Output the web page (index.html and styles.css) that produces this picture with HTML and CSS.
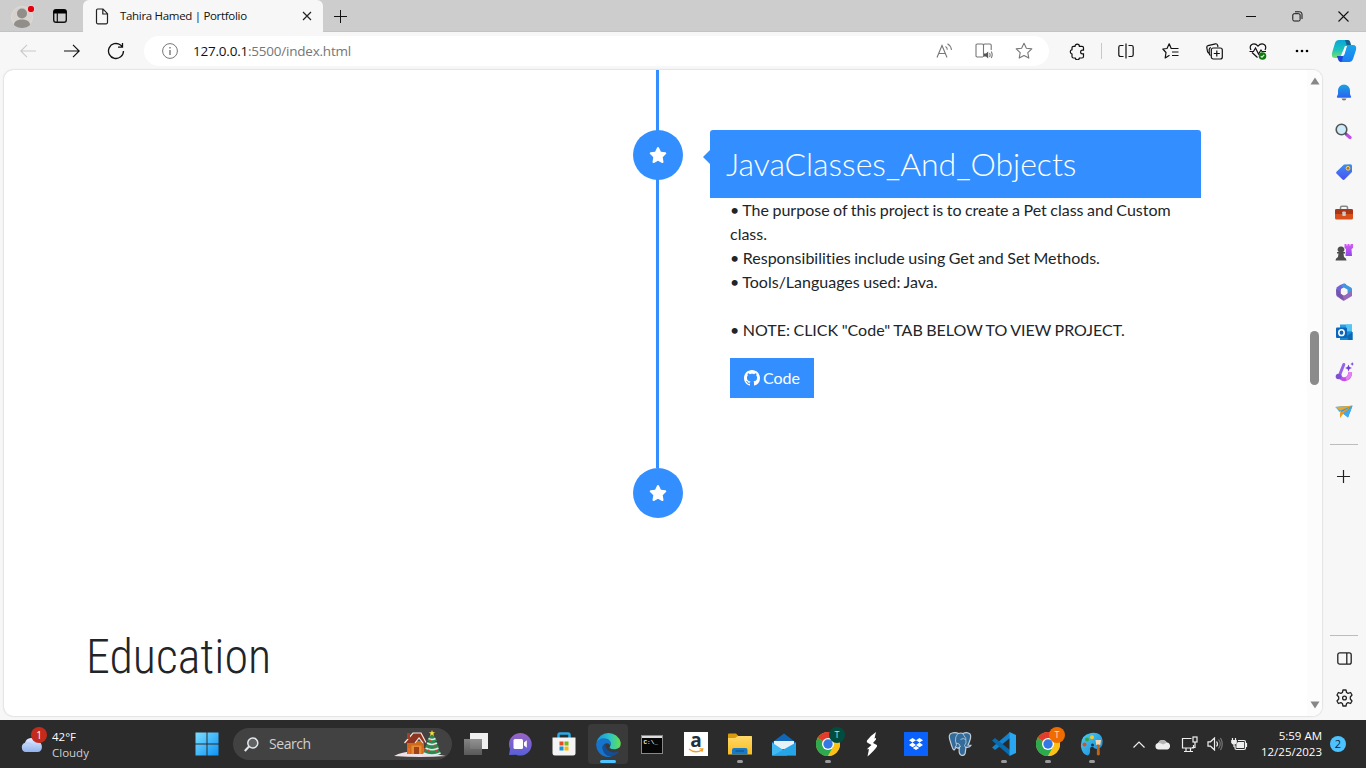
FILE: index.html
```html
<!DOCTYPE html>
<html lang="en">
<head>
<meta charset="utf-8">
<title>Tahira Hamed | Portfolio</title>
<link rel="stylesheet" href="styles.css">
</head>
<body>
<svg class="defs" width="0" height="0">
  <defs>
    <linearGradient id="gWin" gradientUnits="userSpaceOnUse" x1="0" y1="0" x2="24" y2="24"><stop offset="0" stop-color="#7fe0ff"/><stop offset="1" stop-color="#0a91f5"/></linearGradient>
    <linearGradient id="gBell" x1="0" y1="0" x2="0" y2="1"><stop offset="0" stop-color="#1ba3e3"/><stop offset="1" stop-color="#2a62f0"/></linearGradient>
    <linearGradient id="gTag" x1="0" y1="0" x2="0" y2="1"><stop offset="0" stop-color="#3f8df2"/><stop offset="1" stop-color="#4a52f0"/></linearGradient>
    <linearGradient id="gCopA" x1="0" y1="0" x2="0" y2="1"><stop offset="0" stop-color="#0aa5d8"/><stop offset=".55" stop-color="#1cc3ba"/><stop offset="1" stop-color="#7fe06a"/></linearGradient>
    <linearGradient id="gCopB" x1="0" y1="0" x2="0" y2="1"><stop offset="0" stop-color="#18a5ea"/><stop offset="1" stop-color="#1a7cf5"/></linearGradient>
    <linearGradient id="gEdge" x1="0" y1="0" x2="1" y2="0"><stop offset="0" stop-color="#1b8fdc"/><stop offset=".55" stop-color="#2cc5c8"/><stop offset="1" stop-color="#65e04a"/></linearGradient>
    <linearGradient id="gChat" x1="0" y1="0" x2="0" y2="1"><stop offset="0" stop-color="#9a63c4"/><stop offset="1" stop-color="#5660d8"/></linearGradient>
    <linearGradient id="gFolder" x1="0" y1="0" x2="0" y2="1"><stop offset="0" stop-color="#ffd968"/><stop offset="1" stop-color="#fbbc1e"/></linearGradient>
    <linearGradient id="gCloud" x1="0" y1="0" x2="0" y2="1"><stop offset="0" stop-color="#e3edff"/><stop offset="1" stop-color="#8fb2ee"/></linearGradient>
    <linearGradient id="gPaint" x1="0" y1="0" x2="1" y2="1"><stop offset="0" stop-color="#4dd0f2"/><stop offset="1" stop-color="#1583d8"/></linearGradient>
    <linearGradient id="gRook" x1="0" y1="0" x2="0" y2="1"><stop offset="0" stop-color="#d65bf5"/><stop offset="1" stop-color="#8e48ea"/></linearGradient>
    <linearGradient id="gView" x1="0" y1="0" x2="0" y2="1"><stop offset="0" stop-color="#8a8a8a"/><stop offset="1" stop-color="#5c5c5c"/></linearGradient>
    <symbol id="chrome" viewBox="0 0 24 24">
      <circle cx="12" cy="12" r="12" fill="#fbc116"/>
      <path d="M12 12 1.600 6A12 12 0 0 1 22.400 6Z" fill="#e33b2e"/>
      <path d="M12 12 1.600 6A12 12 0 0 0 12 24L17.200 15Z" fill="#2da94f"/>
      <path d="M12 6h10.400A12 12 0 0 1 12 24l5.200-9Z" fill="#fbc116"/>
      <circle cx="12" cy="12" r="6" fill="#fff"/><circle cx="12" cy="12" r="4.700" fill="#3478e5"/>
    </symbol>
    <symbol id="fa-star" viewBox="0 0 576 512">
      <path fill="#fff" d="M316.900 18C311.600 7 300.400 0 288.100 0s-23.400 7-28.800 18L195 150.300 51.400 171.500c-12 1.800-22 10.200-25.700 21.700s-.7 24.200 7.900 32.700L137.800 329 113.200 474.700c-2 12 3 24.200 12.900 31.300s23 8 33.800 2.300l128.300-68.500 128.300 68.500c10.800 5.700 23.900 4.900 33.800-2.300s14.900-19.300 12.900-31.300L438.500 329 542.700 225.900c8.600-8.500 11.700-21.200 7.900-32.700s-13.700-19.900-25.700-21.700L381.200 150.300 316.900 18z"/>
    </symbol>
  </defs>
</svg>
<div class="screen">
  <header class="titlebar">
    <div class="avatar"><svg width="28" height="28" viewBox="0 0 28 28"><circle cx="14" cy="14" r="10.500" fill="#d6d2cd" stroke="#dfdcd8"/><circle cx="14" cy="10.500" r="5" fill="#918d89"/><path d="M6 22c0-4 4-5.500 8-5.500s8 1.500 8 5.500c-2 2-5 3-8 3s-6-1-8-3Z" fill="#918d89"/><circle cx="23" cy="6" r="3.800" fill="#e3000b" stroke="#e4e4e4"/></svg></div>
    <div class="tabactions"><svg width="16" height="16" viewBox="0 0 16 16"><rect x="1.700" y="1.700" width="12.600" height="12.600" rx="2.300" fill="none" stroke="#111" stroke-width="1.400"/><path d="M1.500 5.500V4a2.500 2.500 0 0 1 2.500-2.500h8A2.500 2.500 0 0 1 14.500 4v1.500Z"/><path d="M5.300 5v9" stroke="#111" stroke-width="1.200"/></svg></div>
    <div class="tab">
      <svg width="14" height="17" viewBox="0 0 14 17" fill="none" stroke="#222" stroke-width="1.200"><path d="M1.500 2.200Q1.500 1 2.700 1H8l4.500 4.700V14.600q0 1.200-1.200 1.200H2.700q-1.200 0-1.200-1.200ZM7.800 1v5h4.700"/></svg>
      <span class="tab-title">Tahira Hamed | Portfolio</span>
      <svg class="tab-close" width="10" height="10" viewBox="0 0 10 10" stroke="#222" stroke-width="1.200"><path d="m1 1 8 8M9 1 1 9"/></svg>
    </div>
    <svg class="newtab" width="13" height="13" viewBox="0 0 13 13" stroke="#111"><path d="M6.500 0v13M0 6.500h13"/></svg>
    <div class="winctl">
      <span><svg width="10" height="10" viewBox="0 0 10 10"><path d="M0 5.500h10" stroke="#111"/></svg></span>
      <span><svg width="11" height="11" viewBox="0 0 11 11" fill="none" stroke="#111"><rect x=".8" y="2.700" width="7.300" height="7.300" rx="1.300"/><path d="M3 .8h4.700q2.300 0 2.300 2.300V8"/></svg></span>
      <span><svg width="11" height="11" viewBox="0 0 11 11" stroke="#111" stroke-width="1.100"><path d="m.5.500 10 10M10.500.500l-10 10"/></svg></span>
    </div>
  </header>
  <div class="browser">
    <div class="main">
      <nav class="toolbar">
        <div class="nav">
          <span><svg width="16" height="14" viewBox="0 0 16 14" fill="none" stroke="#c9c9c9" stroke-width="1.100"><path d="M16 7H1M7 .8.800 7 7 13.200"/></svg></span>
          <span><svg width="16" height="14" viewBox="0 0 16 14" fill="none" stroke="#111" stroke-width="1.200"><path d="M0 7h15M9 .8 15.200 7 9 13.200"/></svg></span>
          <span><svg width="18" height="18" viewBox="0 0 18 18" fill="none" stroke="#111" stroke-width="1.300"><path d="M16.500 9A7.500 7.500 0 1 1 13.500 3l1.700 1.500M15.500 1v4.200h-4.500"/></svg></span>
        </div>
        <div class="address">
          <svg class="info" width="16" height="16" viewBox="0 0 16 16" fill="none" stroke="#777"><circle cx="8" cy="8" r="7.400"/><path d="M8 7v5M8 4v1.500" stroke-width="1.400"/></svg>
          <span class="url"><b>127.0.0.1</b>:5500/index.html</span>
          <span class="aicon read"><svg width="17" height="16" viewBox="0 0 17 16" fill="none" stroke="#777" stroke-width="1.100"><path d="m1 14.500 5-12 5 12M2.700 10.500h6.600M9.500 3.500q1.800 1 1.800 3.300M11.500.8q3.400 2 4 6"/></svg></span>
          <span class="aicon book"><svg width="18" height="16" viewBox="0 0 18 16" fill="none" stroke="#777" stroke-width="1.100"><path d="M8 14H2.200Q1 14 1 12.800V2.200Q1 1 2.200 1H7q1.500 0 1.500 1.200V14M8.500 2.200Q8.500 1 10 1h5q1.200 0 1.200 1.200V7"/><path d="M9 10.500h2l2.200-2v7l-2.200-2H9Z" fill="#555" stroke="none"/><path d="M14.500 10q1.300 2 0 4M16.200 8.500q2 3.300 0 6.500"/></svg></span>
          <span class="aicon fav"><svg width="18" height="18" viewBox="0 0 18 18" fill="none" stroke="#777" stroke-width="1.100" stroke-linejoin="round"><path d="m9 1.200 2.400 5 5.400.7-4 3.800 1 5.400L9 13.500l-4.800 2.600 1-5.400-4-3.800 5.400-.7Z"/></svg></span>
        </div>
        <div class="tools">
          <span class="tool ext"><svg width="17" height="17" viewBox="0 0 17 17" fill="none" stroke="#111" stroke-width="1.200"><path d="M6 3.300a2.200 2.200 0 0 1 4.400 0H13q1.500 0 1.500 1.500v2.300h-1a1.900 1.900 0 0 0 0 3.800h1v2.600q0 1.500-1.500 1.500h-2.500a2.200 2.200 0 0 1-4.300 0H4.500Q3 15 3 13.500V11a2.200 2.200 0 0 1 0-4.300V4.800Q3 3.300 4.500 3.300Z"/></svg></span>
          <i class="vsep"></i>
          <span class="tool"><svg width="16" height="16" viewBox="0 0 16 16" fill="none" stroke="#111" stroke-width="1.200"><path d="M5.500 13.500H2.500Q.8 13.500.8 11.800V4.200Q.8 2.500 2.500 2.500h3M10.500 2.500h3q1.700 0 1.700 1.700v7.600q0 1.700-1.700 1.700h-3M8 .5v15"/></svg></span>
          <span class="tool"><svg width="17" height="16" viewBox="0 0 17 16" fill="none" stroke="#111" stroke-width="1.200" stroke-linejoin="round"><path d="M10 5.500 9.200 5.500 7.200.8 5 5.500.8 6 4 9.500 3.200 15 7.500 12.300M10 5.500h6.500M10 9h6.500M10 12.500h6.500"/></svg></span>
          <span class="tool"><svg width="17" height="17" viewBox="0 0 17 17" fill="none" stroke="#111" stroke-width="1.200"><path d="M3.200 10.500Q1.800 10 1.500 8.500L.8 4.700Q.6 3 2 2.700L9.500.8Q11 .5 11.600 2.200L12 4M4.500 12.500Q3.200 12 3.200 10V6.500Q3.200 4.600 5 4.600"/><rect x="5.300" y="5" width="11" height="11" rx="2"/><path d="M10.800 7.500v6M7.800 10.500h6"/></svg></span>
          <span class="tool"><svg width="18" height="17" viewBox="0 0 18 17" fill="none" stroke="#111" stroke-width="1.200"><path d="M2 7Q.2 3.500 2.500 1.700 6-.3 9 3.200 12-.3 15.500 1.700 17.700 3.500 16 7M3 9.500l5.500 5M.5 8.500h4L6.500 5l3 6L12 7l1 1.500h4"/><circle cx="13.500" cy="13" r="3.800" fill="#0f7b0f" stroke="none"/><path d="m11.800 13.200 1.200 1 2.200-2.400" stroke="#d8f0d8"/></svg></span>
          <span class="tool"><svg width="14" height="4" viewBox="0 0 14 4"><circle cx="2" cy="2" r="1.300"/><circle cx="7" cy="2" r="1.300"/><circle cx="12" cy="2" r="1.300"/></svg></span>
        </div>
      </nav>
      <div class="viewport">
        <main class="page">
          <section class="timeline">
            <div class="rail">
              <div class="dot"><svg width="18" height="16"><use href="#fa-star"/></svg></div>
              <div class="dot"><svg width="18" height="16"><use href="#fa-star"/></svg></div>
            </div>
            <article class="project">
              <h2>JavaClasses_And_Objects</h2>
              <div class="project-body">
                <p>• The purpose of this project is to create a Pet class and Custom<br>class.<br>• Responsibilities include using Get and Set Methods.<br>• Tools/Languages used: Java.<br><br>• NOTE: CLICK "Code" TAB BELOW TO VIEW PROJECT.</p>
                <a class="code"><svg width="16" height="16" viewBox="0 0 16 16" fill="#fff"><path d="M8 0C3.580 0 0 3.580 0 8c0 3.540 2.290 6.530 5.470 7.590.4.070.55-.17.55-.38 0-.19-.01-.82-.01-1.490-2.010.37-2.530-.49-2.690-.94-.09-.23-.48-.94-.82-1.130-.28-.15-.68-.52-.01-.53.63-.01 1.080.58 1.230.82.72 1.210 1.870.87 2.330.66.070-.52.280-.87.510-1.070-1.780-.2-3.640-.89-3.640-3.950 0-.87.310-1.590.82-2.150-.08-.2-.36-1.020.08-2.120 0 0 .67-.21 2.200.82.640-.18 1.320-.27 2-.27s1.360.09 2 .27c1.530-1.040 2.200-.82 2.200-.82.440 1.100.160 1.920.08 2.120.51.560.82 1.270.82 2.150 0 3.070-1.870 3.750-3.650 3.950.290.250.540.730.540 1.480 0 1.070-.01 1.930-.01 2.200 0 .21.150.46.550.38A8.010 8.010 0 0 0 16 8c0-4.420-3.580-8-8-8z"/></svg>Code</a>
              </div>
            </article>
          </section>
          <h1>Education</h1>
        </main>
        <div class="scrollbar">
          <svg width="10" height="8" viewBox="0 0 10 8"><path d="M5 .5 9.500 7.500H.5Z" fill="#878787"/></svg>
          <i class="thumb"></i>
          <svg class="down" width="10" height="8" viewBox="0 0 10 8"><path d="M5 7.500 9.500.5H.5Z" fill="#878787"/></svg>
        </div>
      </div>
    </div>
    <aside class="sidebar">
      <span class="copilot"><svg width="26" height="24" viewBox="0 0 26 24"><path d="M8 1h8q2 0 2.800 3L20 7h-6l-5 12H4q-4 0-3-5L4 4Q5 1 8 1Z" fill="url(#gCopA)"/><path d="M14 1h3q2 0 2.500 3l.8 3H16Z" fill="#15608c"/><path d="M18 23h-8q-2 0-2.800-3L6 17h5l5-11h6q4 0 3 5l-3 9q-1 3-4 3Z" fill="url(#gCopB)"/><path d="M6 17h6l-1 5.500Q8 24 7 20Z" fill="#2146d8"/><path d="M14.500 7 10.300 17h1.300q1.400 0 2-2L16 7Z" fill="#fff"/></svg></span>
      <span><svg width="16" height="18" viewBox="0 0 16 18"><path d="M2 11V7.500a6 6 0 0 1 12 0V11l1.200 3q0 .8-1 .8H1.800q-1 0-1-.8Z" fill="url(#gBell)"/><path d="M5.500 15.500h5q-.5 2-2.500 2t-2.500-2Z" fill="#777"/></svg></span>
      <span class="lens"><svg width="17" height="17" viewBox="0 0 17 17"><path d="m11.500 11.500 3.500 3" stroke="#c04bec" stroke-width="3.200" stroke-linecap="round"/><path d="m9.500 9.500 2 2" stroke="#555" stroke-width="2"/><circle cx="6.500" cy="6.500" r="5.300" fill="#cbeafa" stroke="#555" stroke-width="1.600"/></svg></span>
      <span><svg width="18" height="18" viewBox="0 0 18 18"><path d="M9 1.500 15.500 1.300Q17 1.300 17 3v6L9.500 16.500Q8.500 17.300 7.500 16.500L1.500 10.500Q.8 9.500 1.500 8.800Z" fill="url(#gTag)"/><circle cx="13" cy="5.300" r="1.900" fill="#a77725" stroke="#ffd84d"/></svg></span>
      <span><svg width="18" height="15" viewBox="0 0 18 15"><path d="M5.500 4V2.500Q5.500 1.300 7 1.300h4q1.500 0 1.500 1.200V4" fill="none" stroke="#888" stroke-width="1.500"/><rect y="4" width="18" height="10.500" rx="1.500" fill="#d8501b"/><path d="M0 5.500Q0 4 1.500 4h15Q18 4 18 5.500V9H0Z" fill="#a8371a"/><rect x="7.300" y="6.500" width="3.500" height="4.500" rx=".8" fill="#ccc"/></svg></span>
      <span><svg width="18" height="20" viewBox="0 0 18 20"><path d="M9.500 2h2v1.500h1V2h2v1.500h1V2H18v4l-1.500 1 .5 7h-6.500L11 7 9.500 6Z" fill="url(#gRook)"/><path d="M6 4.500a3 3 0 0 1 2 5.500h2v1.500H8.500L9 15q2.500 1 2.500 3.500H.5Q.5 16 3 15l.5-3.500H2V10h2a3 3 0 0 1 2-5.500Z" fill="#4d4d4d"/></svg></span>
      <span><svg width="18" height="18" viewBox="0 0 18 18"><path d="M9 .5Q5 1.500 1.500 4.500 1 8 1.500 12.500L6 10V6l5-3V1Z" fill="#7064d8"/><path d="M9 .5 16 4.500Q17 5 17 6v6l-4.500-1V6.500L6 3Z" fill="#4297dd"/><path d="M17 8v5L9.500 17.500Q8.500 18 7 17L1.500 13 6 10.500l3 1.800Z" fill="#9968b8"/><path d="M1.500 12.500 9 17.500l-2.500-8L1 6Z" fill="#7455a9"/><path d="m9 5.500 3.200 1.800v3.500L9 12.500 5.800 10.800V7.300Z" fill="#f6f6f6"/></svg></span>
      <span><svg width="17" height="17" viewBox="0 0 17 17"><path d="M4 .5h12v13H4Z" fill="#2a9fe0"/><path d="M10 .5h6V7h-6Z" fill="#54c6f5"/><path d="M4 8 16.500 8v8H4Z" fill="#1688d8"/><path d="M11 12 16.500 8v8H12Z" fill="#0d67b3"/><rect y="3.500" width="11" height="10.500" rx="1" fill="#0b65ba"/><ellipse cx="5.500" cy="8.700" rx="2.700" ry="2.900" fill="none" stroke="#fff" stroke-width="1.500"/></svg></span>
      <span><svg width="19" height="20" viewBox="0 0 19 20"><path d="M4.500 12.500a5 5 0 0 0 5 4.800q5.500-.5 5.700-7" fill="none" stroke="#c64cec" stroke-width="4"/><path d="M11 16.800q4.200-1.500 4.200-6.800" fill="none" stroke="#e582ef" stroke-width="3.500"/><path d="M8.800 2.500 5 12" stroke="#9663e8" stroke-width="3" stroke-linecap="round"/><circle cx="3.500" cy="14.500" r="2.800" fill="#7d50d5"/><path d="m13.500 2.500 1 2.500 2.500 1-2.500 1-1 2.500-1-2.500-2.500-1 2.500-1ZM17.200 0l.6 1.500 1.200.5-1.200.6-.6 1.400-.6-1.400-1.200-.6 1.200-.5Z" fill="#713bdc"/></svg></span>
      <span><svg width="18" height="14" viewBox="0 0 18 14"><path d="M.5 2 17.500.8 13 12.500Z" fill="#268bd5"/><path d="M.5 2 17.500.8 4.500 7Z" fill="#40acec"/><path d="M17.500.8 5 7.500V13l3-4Z" fill="#ef991a"/><path d="M17.500.8 8 8.800l5 3.700Z" fill="#3aacf5"/><path d="M.5 2 17 .8 5 5.500Z" fill="#eca72b"/></svg></span>
      <i class="hsep first"></i>
      <span class="lens"><svg width="13" height="13" viewBox="0 0 13 13" stroke="#222" stroke-width="1.200"><path d="M6.500 0v13M0 6.500h13"/></svg></span>
      <i class="hsep last"></i>
      <span><svg width="15" height="13" viewBox="0 0 15 13" fill="none" stroke="#222" stroke-width="1.300"><rect x=".8" y=".8" width="13.400" height="11.400" rx="2"/><path d="M9.800 1v11"/></svg></span>
      <span><svg width="17" height="18" viewBox="0 0 17 18" fill="none" stroke="#222" stroke-width="1.300" stroke-linejoin="round"><path d="M7 1h3l.6 2.500 1.500.9 2.500-.9L16 6l-1.700 2v2l1.700 2-1.400 2.500-2.500-.9-1.500.9L10 17H7l-.6-2.500-1.500-.9-2.500.9L1 12l1.700-2V8L1 6l1.400-2.500 2.500.9 1.500-.9Z"/><circle cx="8.500" cy="9" r="1.900"/></svg></span>
    </aside>
  </div>
  <footer class="taskbar">
    <div class="weather">
      <div class="cloud"><svg width="26" height="18" viewBox="0 0 26 20"><path d="M6 19a5.500 5.500 0 0 1-.8-10.500A7.500 7.500 0 0 1 19 7.500 5.800 5.800 0 0 1 19 19Z" fill="url(#gCloud)"/><path d="M5 9.500q5-1.500 8 2" fill="none" stroke="#b8cdf4" stroke-width="1.500"/></svg><b class="alert">1</b></div>
      <div class="wtext"><span>42°F</span><span class="dim">Cloudy</span></div>
    </div>
    <svg class="start" width="24" height="24" viewBox="0 0 24 24" fill="url(#gWin)"><path d="M.5.500H11.500v11H.5ZM12.500.500h11v11h-11ZM.5 12.500h11v11H.5ZM12.500 12.500h11v11h-11Z"/></svg>
    <div class="search">
      <svg width="15" height="15" viewBox="0 0 15 15" fill="none" stroke="#e5e9ec" stroke-width="1.500"><circle cx="8.800" cy="6" r="5" fill="#626262"/><path d="M5 9.500.8 14" stroke-width="2"/></svg>
      <span>Search</span>
      <svg class="holiday" width="54" height="28" viewBox="0 0 54 28"><path d="M1 26Q12 20 27 22t26 4q-26 2-52 0Z" fill="#efe1e5"/><path d="M14 11h17v13H14Z" fill="#cf6a1b"/><path d="m12 13 8-10h9l4 9-3 1-4-5-4 5Z" fill="#8b3522"/><path d="m11.500 13 8.500-10h8l5 9.500M22 13l4-5 4 5" fill="none" stroke="#f8e8df" stroke-width="1.200"/><path d="M14 3h3v6h-3Z" fill="#a34024"/><path d="M18.500 15.500h10V24h-10Z" fill="#e58c35"/><path d="M21 17h5v7h-5Z" fill="#9c4415"/><path d="M15 18h2v6h-2M29.500 18h2v6h-2Z" fill="#ef6b22"/><path d="m39 2-5 9h2l-4 6h2l-4 6q9 4 18 0l-4-6h2l-4-6h2Z" fill="#2f894d"/><path d="M35.500 8.500q3.500 2 7 0M34 13q5 3 10 0M32.500 18q6.500 3.500 13 0M30.500 23q8.500 4 17 0" stroke="#dcecf1" stroke-width="1.700" fill="none"/><path d="m39 0 .8 2.200H42L40.300 3.700 41 6l-2-1.400L37 6l.7-2.300L36 2.200h2.200Z" fill="#ffdc3e"/><g fill="#df3c33"><circle cx="37" cy="10.500" r="1"/><circle cx="42" cy="15.500" r="1.100"/><circle cx="35.500" cy="20.500" r="1.100"/><circle cx="43" cy="20.800" r="1.100"/></g></svg>
    </div>
    <div class="apps">
      <span><svg width="24" height="22" viewBox="0 0 24 22"><path d="M6 0h18v16H6Z" fill="#efefef"/><path d="M0 6h18v16H0Z" fill="url(#gView)" opacity=".93"/></svg></span>
      <span><svg width="24" height="24" viewBox="0 0 24 24"><path d="M12 1a11.300 11.300 0 1 1-4 21.700L1 23l1-6A11.300 11.300 0 0 1 12 1Z" fill="url(#gChat)"/><rect x="5.500" y="7" width="9.500" height="10" rx="1.500" fill="#fff"/><path d="m16 10.500 2.800-2.300v7.600L16 13.500Z" fill="#fff"/></svg></span>
      <span><svg width="24" height="24" viewBox="0 0 24 24"><path d="M6.500 7V3Q6.500 1.500 8 1.500h8q1.500 0 1.500 1.500v4" fill="none" stroke="#2aabe8" stroke-width="2.500"/><path d="M.5 5.500h23V21q0 2.500-2.500 2.500H3Q.5 23.500.5 21Z" fill="#f4f4f4"/><path d="M7.500 9.500h4v4h-4Z" fill="#e84b25"/><path d="M12.500 9.500h4v4h-4Z" fill="#79b51c"/><path d="M7.500 14.500h4v4h-4Z" fill="#1593db"/><path d="M12.500 14.500h4v4h-4Z" fill="#f7b90e"/></svg></span>
      <span class="active"><svg width="25" height="25" viewBox="0 0 24 24"><path d="M.3 10.500A12 12 0 0 1 23.700 10q.6 6-5.200 6.500-4 .2-5.500-1.500 2.500-4.500-1-7.500Q5 5 .3 10.500Z" fill="url(#gEdge)"/><path d="M.3 10.500Q4 4.500 10.500 6.500q5.500 3 3 6.500-1-2.500-4-2-5 2-2 7.500 2.500 4.500 8 5Q8 25.500 3 20-.5 16 .3 10.500Z" fill="#1674cc"/><path d="M9 11q-5 3-1 9.500 5 5.500 12 .5 2.500-2 1.500-2.500-5 2.500-9.500-.5Q8 15 9.500 11Z" fill="#134e98"/></svg></span>
      <span><svg width="22" height="19" viewBox="0 0 22 19"><path d="M0 0h22v19H0Z" fill="#888"/><path d="M1 3h20v15H1Z" fill="#060606"/><path d="M1 1h20v2H1Z" fill="#ddd"/><text x="2.500" y="9" fill="#eee" class="prompt">C:\_</text></svg></span>
      <span><i class="amazon">a<svg width="16" height="6" viewBox="0 0 16 6"><path d="M1 1q6 5 13 1M11.500.8h3.300l-1 3" fill="none" stroke="#f49b22" stroke-width="1.300"/></svg></i></span>
      <span class="open"><svg width="24" height="22" viewBox="0 0 24 22"><path d="M0 5V1.500Q0 .5 1 .5h7L10.500 3H23q1 0 1 1v4H0Z" fill="#d99a12"/><path d="M0 5h7l3-2h13q1 0 1 1v17.500H0Z" fill="url(#gFolder)"/><path d="M4 21.500V17q0-2 2-2h11.500q2 0 2 2v4.500Z" fill="#1879c6"/><path d="M7.500 18h8.500" stroke="#145894" stroke-width="1.500"/></svg></span>
      <span><svg width="24" height="23" viewBox="0 0 24 23"><path d="M0 9.500 12 .5l12 9V22.500H0Z" fill="#1266b8"/><path d="M2 8h20v8H2Z" fill="#e8f1f5"/><path d="m0 9.500 15 10v3H0Z" fill="#41baf3"/><path d="m24 9.500-23 13h23Z" fill="#25a5e8"/></svg></span>
      <span class="open"><svg width="24" height="24"><use href="#chrome"/></svg><b class="profile green">T</b></span>
      <span><svg width="14" height="25" viewBox="0 0 14 25"><path d="M11 0Q5 4 2 8.500 1 10 3 11l3.500 2-4 3.500v1L4 17 2.500 24.500Q9 19 12 14.500 12.500 13 11 12.500L8 11l3-3.500V6L9.500 6.500Z" fill="#fff"/></svg></span>
      <span><svg width="24" height="24" viewBox="0 0 24 24"><path d="M0 0h24v24H0Z" fill="#0b61fb"/><path d="M8.500 6 12 8.300 8.500 10.600 5 8.300ZM15.500 6 19 8.300l-3.500 2.300L12 8.300ZM8.500 10.600l3.500 2.300-3.500 2.300L5 12.900ZM15.500 10.600l3.500 2.300-3.500 2.300L12 12.900ZM12 13.900l3.200 2.100L12 18.100 8.800 16Z" fill="#fff"/></svg></span>
      <span><svg width="24" height="24" viewBox="0 0 24 24"><path d="M4 1Q8 0 10.500 1.500 13 .5 15 1.500 19-.5 22 2q2 3-2 11l3 .2q-1 2.500-5 2l-.8 6q-1 3-4 2t-1.700-8l-1.500 1-2-1-1.500 2.500Q5 19 2.500 10-.5 2 4 1Z" fill="#336b9b" stroke="#c3ced5" stroke-width="1.200"/><path d="M9.500 2Q7 5 7.500 9l1 4-1.500 2.500M15 2q4 4 3 9l-1.500 2.500M12.500 15q-.5-4-4.500-4M12.500 7.500q3-2 5 0M16.500 13.500l1 2" fill="none" stroke="#d4e0e8" stroke-width=".7"/></svg></span>
      <span class="open"><svg width="24" height="24" viewBox="0 0 24 24"><path d="M18 0v6L3 18 0 15.500Z" fill="#1283cf"/><path d="M18 24v-6L3 6 0 8.500Z" fill="#086aaf"/><path d="m17.500 0 6.500 3v18l-6.500 3Z" fill="#2aa5ef"/></svg></span>
      <span class="open"><svg width="24" height="24"><use href="#chrome"/></svg><b class="profile orange">T</b></span>
      <span class="open"><svg width="24" height="24" viewBox="0 0 24 24"><path d="M11 1Q21-.5 22.500 8q1 8-5.500 9-2 .3-4-2-2.500-1-3 2 .5 6-2.500 6.500Q2 22 1 15 0 3 11 1Z" fill="url(#gPaint)"/><circle cx="12" cy="5.300" r="2" fill="#f7cb20"/><circle cx="7" cy="7.500" r="2" fill="#39a541"/><circle cx="4.500" cy="12.500" r="2" fill="#d45029"/><circle cx="12.500" cy="13" r="1.500" fill="#173a5d"/><path d="M15.500 8h5.500l-.7 5h-4Z" fill="#f0d8b3"/><path d="M17 12.500h2.500l.3 10q-1.500 2-3 0Z" fill="#bd661b"/></svg></span>
    </div>
    <div class="tray">
      <span><svg width="12" height="7" viewBox="0 0 12 7" fill="none" stroke="#eee" stroke-width="1.200"><path d="M.5 6.500 6 1l5.500 5.500"/></svg></span>
      <span class="t-cloud"><svg width="16" height="11" viewBox="0 0 16 11"><path d="M3.500 10.500A3.300 3.300 0 0 1 3 4a5 5 0 0 1 9-.5A3.600 3.600 0 0 1 12.500 10.500Z" fill="#eee"/><path d="M3 4q3-.5 5 1.500l4-2A5 5 0 0 0 3 4Z" fill="#b5b5b5"/></svg></span>
      <span class="t-net"><svg width="17" height="17" viewBox="0 0 17 17" fill="none" stroke="#eee" stroke-width="1.200"><path d="M10.500 2.500h-9v9.500h11V9M5 12v3M9.500 12v3M3 15.500h9"/><rect x="12" y="1" width="4" height="5"/><path d="M14 6v5.500h-3"/></svg></span>
      <span><svg width="16" height="14" viewBox="0 0 16 14" fill="none" stroke="#eee" stroke-width="1.200"><path d="M1 4.800h2.500L7.500 1v12L3.500 9.200H1Z"/><path d="M9.500 4.500q2 2.500 0 5"/><path d="M11.500 2.500q3.500 4.500 0 9M13.500 1q3.500 6 0 12" stroke="#777"/></svg></span>
      <span class="t-bat"><svg width="17" height="13" viewBox="0 0 17 13" fill="none" stroke="#eee" stroke-width="1.200"><path d="M7 2.500h6q1.500 0 1.500 1.500v6q0 1.500-1.500 1.500H5.500Q4 11.500 4 10V7.500M15.500 5v4"/><path d="M6 5.500 7.500 4.500H12.500v5H6Z" fill="#eee"/><path d="M.8 2.500h4.400v2q-.5 1.500-2.200 1.500T.8 4.500Z" fill="#eee"/><path d="M1.500 0v2.500M4.500 0v2.500M3 6v3"/></svg></span>
    </div>
    <div class="clock"><span>5:59 AM</span><span>12/25/2023</span></div>
    <b class="count">2</b>
  </footer>
</div>
</body>
</html>
```
FILE: styles.css
```css
* { box-sizing: border-box; }
body { margin: 0; font-family: "Open Sans", "Noto Sans", sans-serif; background: #f7f7f7; overflow: hidden; }
svg { display: block; flex: none; }
.defs { position: absolute; }
.screen { width: 1366px; height: 768px; display: flex; flex-direction: column; }

.titlebar { height: 32px; background: #cdcdcd; display: flex; align-items: center; box-shadow: inset 0 -1px #c3c3c3; }
.avatar { margin-left: 8px; width: 28px; padding-top: 1px; }
.tabactions { margin-left: 16px; }
.tab { margin-left: 15px; width: 240px; height: 32px; background: #f7f7f7; border-radius: 6px 6px 0 0; display: flex; align-items: center; padding: 0 11px 0 12px; }
.tab-title { margin-left: 11px; padding-bottom: 1px; font-size: 11.500px; letter-spacing: -.31px; color: #111; white-space: nowrap; }
.tab-close { margin-left: auto; }
.newtab { margin-left: 11px; }
.winctl { margin-left: auto; display: flex; }
.winctl span { width: 46px; display: flex; justify-content: center; }

.browser { height: 688px; display: flex; background: #f7f7f7; }
.main { width: 1322px; display: flex; flex-direction: column; }
.toolbar { height: 38px; display: flex; align-items: center; }
.nav { display: flex; margin-left: 6px; width: 138px; flex: none; }
.nav span { width: 44px; height: 30px; display: flex; align-items: center; justify-content: center; }
.address { width: 905px; height: 30px; border-radius: 15px; background: #fff; display: flex; align-items: center; padding-left: 18px; flex: none; }
.url { margin-left: 15px; font-size: 13.500px; color: #767676; white-space: nowrap; letter-spacing: -.22px; }
.url b { font-weight: 400; color: #111; }
.aicon { width: 40px; display: flex; justify-content: center; }
.read { margin-left: auto; }
.fav { margin-right: 5px; }
.tools { display: flex; align-items: center; flex: none; }
.tool { width: 44px; display: flex; justify-content: center; }
.ext { margin-left: 6px; }
.vsep { width: 1px; height: 16px; background: #c8c8c8; margin: 0 2px; }
.viewport { margin-left: 4px; width: 1318px; height: 646px; border-radius: 9px; background: #fff; display: flex; overflow: hidden; box-shadow: 0 0 2px #b8b8b8; }

.page { width: 1303px; color: #212529; font-family: Lato, sans-serif; }
.timeline { height: 538px; display: flex; }
.rail { margin-left: 629px; width: 50px; height: 448px; display: flex; flex-direction: column; gap: 288px; padding-top: 60px; background: linear-gradient(#338fff, #338fff) 23px 0 / 3px 398px no-repeat; }
.dot { flex: none; width: 50px; height: 50px; border-radius: 50%; background: #338fff; display: flex; align-items: center; justify-content: center; }
.project { margin: 60px 0 0 27px; width: 491px; }
.project h2 { position: relative; margin: 0; height: 68px; padding: 15px 16px; background: #338fff; color: #fff; font-size: 32px; line-height: 38px; font-weight: 300; letter-spacing: -.04px; border-radius: 3px 3px 0 0; white-space: nowrap; }
.project h2::before { content: ""; position: absolute; left: -7px; top: 20px; border: 7px solid transparent; border-right-color: #338fff; border-left: 0; }
.project-body { padding-left: 20px; font-size: 16px; line-height: 24px; }
.project-body p { margin: 0 0 16px; white-space: nowrap; word-spacing: -.6px; font-variant-ligatures: none; }
.code { width: 84px; height: 40px; background: #338fff; color: #fff; display: flex; align-items: center; justify-content: center; gap: 3px; }
.page h1 { margin: 20px 0 0 82px; font: 300 48px/58px "Roboto Condensed", Roboto, sans-serif; font-stretch: condensed; width: max-content; }
.scrollbar { width: 15px; background: #fcfcfc; display: flex; flex-direction: column; align-items: center; padding: 7px 0; }
.thumb { width: 9px; height: 54px; margin-top: 246px; border-radius: 5px; background: #8b8b8b; }
.down { margin-top: auto; }

.sidebar { width: 44px; height: 688px; display: flex; flex-direction: column; align-items: center; }
.sidebar span { height: 40px; width: 40px; display: flex; align-items: center; justify-content: center; }
.sidebar .copilot { height: 38px; margin-bottom: 2px; }
.sidebar .lens { padding: 0 1px 1px 0; }
.hsep { width: 28px; height: 1px; background: #bcbcbc; }
.first { margin: 12px 0; }
.last { margin: auto 0 2px; }
.sidebar span:last-child { margin-bottom: 2px; }

.taskbar { height: 48px; background: #2b2b2b; color: #fff; display: flex; align-items: center; }
.weather { width: 195px; padding-left: 19px; display: flex; gap: 7px; }
.cloud { position: relative; width: 26px; padding-top: 7px; }
.alert { position: absolute; left: 12px; top: -1px; width: 16px; height: 16px; border-radius: 50%; background: #c42b1c; font-size: 10px; font-weight: 400; line-height: 16px; text-align: center; }
.wtext { display: flex; flex-direction: column; font-size: 11.500px; line-height: 16px; padding-top: 1px; }
.dim { color: #cfcfcf; }
.search { margin-left: 14px; width: 219px; height: 32px; border-radius: 16px; background: #424242; display: flex; align-items: center; padding: 0 5px 0 11px; font-size: 14px; color: #d0d0d0; }
.search span { margin: 0 0 1px 10px; letter-spacing: -.45px; }
.holiday { margin-left: auto; }
.apps { display: flex; margin-left: 2px; }
.apps > span { position: relative; width: 44px; height: 48px; display: flex; align-items: center; justify-content: center; }
.apps .active::before { content: ""; position: absolute; z-index: -1; left: 2px; top: 4px; width: 40px; height: 40px; border-radius: 4px; background: #3a3a3a; }
.apps .active { z-index: 0; }
.open::after, .active::after { content: ""; position: absolute; bottom: 5px; left: 19px; width: 6px; height: 3px; border-radius: 2px; background: #9a9a9a; }
.active::after { left: 14px; width: 16px; background: #4cc2ff; }
.prompt { font: 700 6px "Liberation Mono", monospace; }
.amazon { width: 24px; height: 24px; padding-top: 1px; background: #fff; color: #222f3e; font: 700 19px/15px "Open Sans", sans-serif; display: flex; flex-direction: column; align-items: center; }
.profile { position: absolute; left: 23px; top: 7px; width: 16px; height: 16px; border-radius: 50%; font-size: 9px; font-weight: 400; line-height: 16px; text-align: center; }
.green { background: #004d40; color: #c4dcd6; }
.orange { background: #ef6c00; color: #ffe0c0; }
.tray { display: flex; align-items: center; margin-left: 13px; }
.tray span { width: 24px; display: flex; justify-content: center; }
.tray .t-net { width: 28px; }
.tray .t-bat { width: 25px; }
.clock { width: 70px; display: flex; flex-direction: column; align-items: flex-end; font-size: 11.500px; line-height: 16px; white-space: nowrap; }
.count { margin-left: 8px; width: 16px; height: 16px; border-radius: 50%; background: #4cc2ff; color: #123; font-size: 11px; font-weight: 400; line-height: 16px; text-align: center; }
```
